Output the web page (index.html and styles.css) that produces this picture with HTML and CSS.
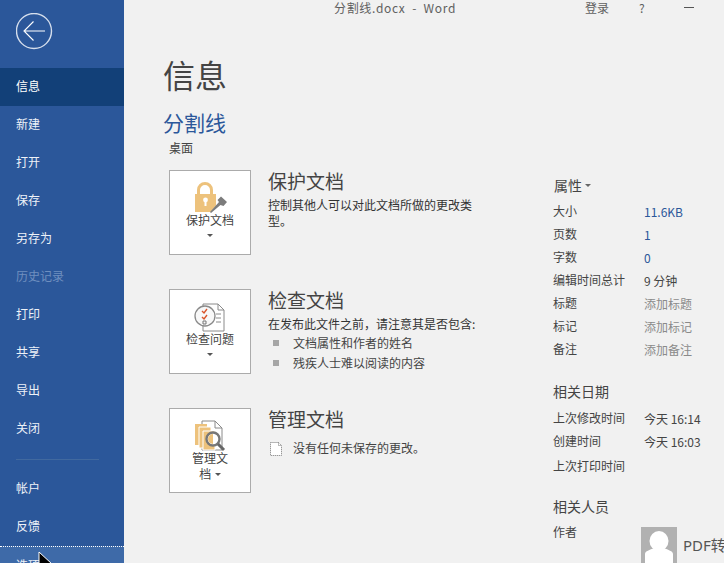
FILE: index.html
```html
<!DOCTYPE html>
<html lang="zh-CN">
<head>
<meta charset="utf-8">
<title>信息 - 分割线.docx - Word</title>
<link rel="stylesheet" href="styles.css">
</head>
<body>
<div class="app">
  <aside class="side">
    <div class="back">
      <svg width="38" height="38" viewBox="0 0 38 38"><circle cx="18" cy="18" r="17.5" fill="none" stroke="#d5deec" stroke-width="1.4"/><path d="M9 18H29M17.5 8.5L8 18l9.5 9.5" fill="none" stroke="#fff" stroke-width="1.1"/></svg>
    </div>
    <nav class="nav">
      <div class="item active">信息</div>
      <div class="item">新建</div>
      <div class="item">打开</div>
      <div class="item">保存</div>
      <div class="item">另存为</div>
      <div class="item disabled">历史记录</div>
      <div class="item">打印</div>
      <div class="item">共享</div>
      <div class="item">导出</div>
      <div class="item">关闭</div>
      <div class="sep"></div>
      <div class="item">帐户</div>
      <div class="item">反馈</div>
      <div class="item hover">选项</div>
    </nav>
  </aside>
  <main class="main">
    <header class="titlebar">
      <div class="doc">分割线.docx&nbsp; -&nbsp; Word</div>
      <div class="login">登录</div>
      <div class="help">?</div>
      <div class="min"></div>
    </header>
    <h1 class="title">信息</h1>
    <div class="name">分割线</div>
    <div class="path">桌面</div>
    <div class="body">
      <section class="cards">
        <div class="card">
          <div class="btn">
            <svg class="btn-icon" width="36" height="34" viewBox="0 0 36 34"><path d="M5 13V9a8 8 0 0 1 16 0v4h-3V9a5 5 0 0 0-10 0v4z" fill="#edc27c"/><path d="M3 13h21v18H3z" fill="#edc27c"/><circle cx="13.500" cy="19" r="2.400" fill="#fff"/><path d="M12.500 20h2v5h-2z" fill="#fff"/><path d="M17 33l9-11-2-3 5-5 8 7-5 6-3-1-8 8z" fill="#fff"/><path d="M19 32l-1-1 9-10-1.500-2 3.500-3.500 6 5.500-3.500 4-3-1z" fill="#7c7c7c"/></svg>
            <div class="btn-label">保护文档</div>
            <div class="caret"></div>
          </div>
          <div class="info">
            <h3>保护文档</h3>
            <p class="desc">控制其他人可以对此文档所做的更改类<br>型。</p>
          </div>
        </div>
        <div class="card">
          <div class="btn">
            <svg class="btn-icon" width="36" height="34" viewBox="0 0 36 34"><path d="M11 4h15l6 6v21H11z" fill="#fff" stroke="#8a8a8a"/><path d="M26 4v6h6M24 14h5M24 18h5M24 22h5" fill="none" stroke="#8a8a8a"/><circle cx="13" cy="16" r="10" fill="#f8f8f8" stroke="#8a8a8a" stroke-width="1.300"/><path d="M10 11l2 2 3-4M10 17l2 2 3-4" fill="none" stroke="#d9552b" stroke-width="1.400"/><path d="M11 21h3v3h-3z" fill="none" stroke="#777"/></svg>
            <div class="btn-label">检查问题</div>
            <div class="caret"></div>
          </div>
          <div class="info">
            <h3>检查文档</h3>
            <p class="desc">在发布此文件之前，请注意其是否包含:</p>
            <ul class="bullets">
              <li>文档属性和作者的姓名</li>
              <li>残疾人士难以阅读的内容</li>
            </ul>
          </div>
        </div>
        <div class="card">
          <div class="btn">
            <svg class="btn-icon" width="36" height="34" viewBox="0 0 36 34"><path d="M10 2h13l7 7v22H10z" fill="#fff" stroke="#8a8a8a"/><path d="M23 2v7h7" fill="none" stroke="#8a8a8a"/><path d="M3 5h12v21H3z" fill="#edc27c"/><path d="M7 8h12v21H7z" fill="#edc27c" stroke="#fff"/><path d="M11 12h12v19H11z" fill="#edc27c" stroke="#fff"/><circle cx="21" cy="20" r="6.500" fill="#fff" stroke="#777" stroke-width="2.400"/><path d="M21 15a5 5 0 0 0 0 10z" fill="#edc27c"/><path d="M26 25l6 6" stroke="#666" stroke-width="3"/></svg>
            <div class="btn-label narrow">管理文档 <span class="caret inline"></span></div>
          </div>
          <div class="info">
            <h3>管理文档</h3>
            <div class="note">
              <svg width="16" height="16" viewBox="0 0 16 16"><path d="M2.500 2.500h8l3 3v10h-11z" fill="#fff" stroke="#777" stroke-dasharray="1 1"/><path d="M10.500 2.500v3h3" fill="none" stroke="#777" stroke-dasharray="1 1"/></svg>
              <span>没有任何未保存的更改。</span>
            </div>
          </div>
        </div>
      </section>
      <section class="props">
        <div class="sect first">属性<span class="caret small"></span></div>
        <dl class="rows tight">
          <div class="row"><dt>大小</dt><dd class="blue">11.6KB</dd></div>
          <div class="row"><dt>页数</dt><dd class="blue">1</dd></div>
          <div class="row"><dt>字数</dt><dd class="blue">0</dd></div>
          <div class="row"><dt>编辑时间总计</dt><dd>9 分钟</dd></div>
          <div class="row"><dt>标题</dt><dd class="muted">添加标题</dd></div>
          <div class="row"><dt>标记</dt><dd class="muted">添加标记</dd></div>
          <div class="row"><dt>备注</dt><dd class="muted">添加备注</dd></div>
        </dl>
        <div class="sect dates">相关日期</div>
        <dl class="rows">
          <div class="row"><dt>上次修改时间</dt><dd>今天 16:14</dd></div>
          <div class="row"><dt>创建时间</dt><dd>今天 16:03</dd></div>
          <div class="row last"><dt>上次打印时间</dt><dd></dd></div>
        </dl>
        <div class="sect people">相关人员</div>
        <div class="author">
          <div class="author-label">作者</div>
          <svg class="avatar" width="36" height="36" viewBox="0 0 36 36"><path d="M0 0h36v36H0z" fill="#b1b1b1"/><ellipse cx="18" cy="14" rx="9.500" ry="10" fill="#fff"/><path d="M4 36v-9c0-3 5-4 9-6h10c4 2 9 3 9 6v9z" fill="#fff"/></svg>
          <div class="author-name">PDF转</div>
        </div>
      </section>
    </div>
  </main>
</div>
<svg class="cursor" width="16" height="24" viewBox="0 0 16 24"><path d="M1 1v17l4-4 3 7 3-1-3-7h6z" fill="#000" stroke="#fff"/></svg>
</body>
</html>
```
FILE: styles.css
```css
* { box-sizing: border-box; }
html, body { margin: 0; height: 563px; overflow: hidden; background: #f1f1f1; }
body { font-family: "Noto Sans CJK SC", "Noto Sans", sans-serif; color: #444; font-size: 12px; }
.app { display: flex; height: 563px; overflow: hidden; }

.side { width: 124px; flex: none; background: #2b579a; color: #fff; height: 600px; }
.back { height: 68px; padding: 13px 0 0 16px; }
.back svg { display: block; }
.nav { display: flex; flex-direction: column; }
.item { height: 38px; line-height: 36px; padding-left: 16px; font-size: 12px; color: #eef2f8; flex: none; }
.item.active { background: #124078; color: #fff; }
.item.disabled { color: #6f8fbf; }
.item.hover { background: #3e6aa8; border-top: 1px dotted #fff; }
.sep { height: 1px; margin: 11px 25px 10px 16px; background: #41699f; flex: none; }

.main { flex: 1; min-width: 0; }
.titlebar { height: 16px; display: flex; color: #606060; font-size: 12px; line-height: 15px; }
.doc { margin-left: 210px; width: 122px; white-space: nowrap; letter-spacing: .65px; }
.login { margin-left: 129px; width: 24px; }
.help { margin-left: 30px; width: 10px; }
.min { margin-left: 35px; margin-top: 7px; width: 10px; height: 1px; background: #555; }

.title { margin: 36px 0 0 39px; font-size: 32px; line-height: 44px; font-weight: 400; color: #444; }
.name { margin: 12px 0 0 39px; font-size: 21px; line-height: 28px; color: #2b579a; }
.path { margin: 3px 0 0 45px; line-height: 18px; color: #444; }

.body { display: flex; margin-top: 13px; }
.cards { width: 429px; padding-left: 45px; flex: none; }
.card { display: flex; height: 119px; }
.btn { width: 82px; height: 85px; background: #fff; border: 1px solid #ababab; text-align: center; flex: none; padding-top: 10px; }
.btn-icon { display: block; margin: 0 auto -3px; }
.btn-label { font-size: 12px; line-height: 16px; color: #444; }
.btn-label.narrow { width: 38px; margin: 0 auto; }
.caret { width: 0; height: 0; margin: 6px auto 0; border: 3px solid transparent; border-top: 3px solid #555; border-bottom: 0; }
.caret.inline { display: inline-block; margin: 0 0 2px 1px; vertical-align: middle; }
.caret.small { display: inline-block; margin: 0 0 3px 3px; vertical-align: middle; border-top-color: #666; }

.info { margin: -1px 0 0 17px; }
.info h3 { margin: 0 0 4px; font-size: 19px; line-height: 24px; font-weight: 400; color: #444; }
.desc { margin: 0; width: 220px; font-size: 12px; line-height: 16px; color: #333; }
.bullets { list-style: none; margin: 1px 0 0; padding: 0; }
.bullets li { position: relative; padding-left: 25px; height: 20px; line-height: 20px; color: #444; }
.bullets li::before { content: ""; position: absolute; left: 5px; top: 7px; width: 6px; height: 6px; background: #a6a6a6; }
.note { display: flex; align-items: center; gap: 9px; margin-top: 9px; color: #444; line-height: 16px; }

.props { flex: 1; }
.sect { font-size: 14px; line-height: 20px; color: #444; }
.sect.first { margin: 5px 0 0 1px; }
.sect.dates { margin-top: 18px; }
.sect.people { margin-top: 16px; }
.rows { margin: 8px 0 0; }
.rows.tight { margin-top: 7px; }
.row { display: flex; height: 23px; line-height: 18px; }
.row.last { margin-top: 2px; }
dt { width: 91px; flex: none; color: #444; }
dd { margin: 0; color: #444; position: relative; top: 1px; }
.blue { color: #2b579a; }
.muted { color: #8a8a8a; }
.author { display: flex; margin-top: 7px; height: 60px; }
.author-label { width: 88px; flex: none; line-height: 18px; }
.avatar { margin-top: 4px; flex: none; }
.author-name { margin: 11px 0 0 6px; font-size: 15px; color: #555; white-space: nowrap; font-family: "Noto Sans", "Noto Sans CJK SC", sans-serif; }

.cursor { position: absolute; left: 38px; top: 551px; }
```
